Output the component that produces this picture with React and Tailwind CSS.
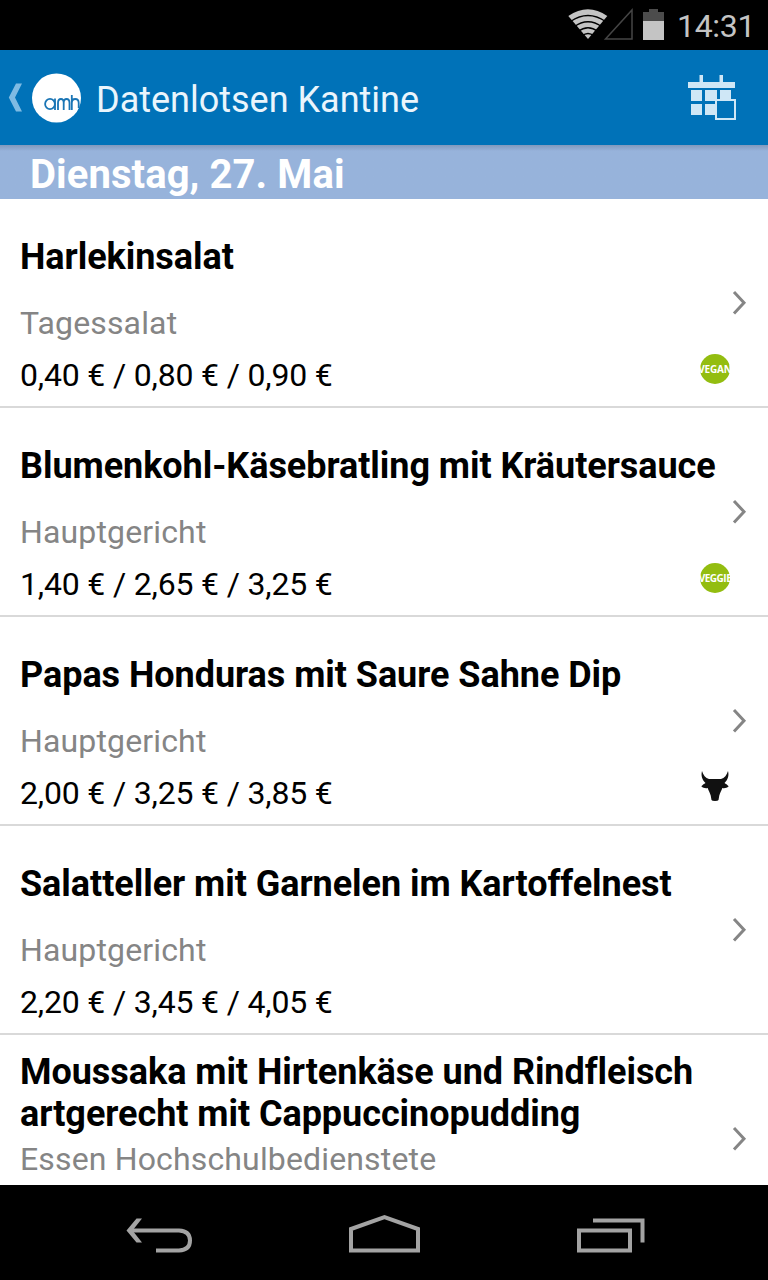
import React from 'react';

const meals = [
  { title: 'Harlekinsalat', category: 'Tagessalat', price: '0,40 € / 0,80 € / 0,90 €', badge: 'vegan' },
  { title: 'Blumenkohl-Käsebratling mit Kräutersauce', category: 'Hauptgericht', price: '1,40 € / 2,65 € / 3,25 €', badge: 'veggie' },
  { title: 'Papas Honduras mit Saure Sahne Dip', category: 'Hauptgericht', price: '2,00 € / 3,25 € / 3,85 €', badge: 'beef' },
  { title: 'Salatteller mit Garnelen im Kartoffelnest', category: 'Hauptgericht', price: '2,20 € / 3,45 € / 4,05 €' },
  { title: 'Moussaka mit Hirtenkäse und Rindfleisch artgerecht mit Cappuccinopudding', category: 'Essen Hochschulbedienstete', price: '' },
];

const StatusBar = () => (
  <div className="flex h-[50px] shrink-0 items-start justify-end bg-black pr-[15px]">
    <svg className="mt-[8px]" width="96" height="34" viewBox="568 8 96 34" fill="none">
      <path d="M588 39 L568.3 16 Q588 2.500 607.3 16 Z" fill="#c4c4c4" />
      <g stroke="#000" strokeWidth="1.300">
        <path d="M570.500 21.500 Q588 9.500 605.500 21.500" />
        <path d="M574 27 Q588 16.500 602 27" />
        <path d="M578 31.500 Q588 24 598 31.500" />
        <path d="M582 36 Q588 31 594 36" />
      </g>
      <path d="M605.500 39 H632 V10 Z" stroke="#454545" strokeWidth="1.500" />
      <path d="M643 12 H649 V9 H658 V12 H664 V22 H643 Z" fill="#4c4c4c" />
      <path d="M643 21 H664 V40 H643 Z" fill="#c4c4c4" />
    </svg>
    <span className="ml-[13px] mt-[7px] w-[76px] whitespace-nowrap text-[32px] leading-[38px] tracking-[-0.3px] text-[#c4c4c4]">14:31</span>
  </div>
);

const AppBar = () => (
  <header className="flex h-[95px] shrink-0 items-center bg-[#0072b8]">
    <svg className="ml-[8px]" width="15" height="29" viewBox="0 0 15 29">
      <path d="M8 0.500 H14 L7 14.500 L14 28.500 H8 L0.800 14.500 Z" fill="#7fbbe3" />
    </svg>
    <svg className="ml-[9px]" width="49" height="50" viewBox="0 0 49 50" fill="none">
      <ellipse cx="24.500" cy="25" rx="24.500" ry="24.500" fill="#fff" />
      <g stroke="#1a75b5" strokeWidth="1.800">
        <ellipse cx="18" cy="31" rx="4.900" ry="5.200" />
        <path d="M23 25.500 V37 M26 37 V30 Q26 26 29 26 Q31.700 26 31.700 30 V37 M31.700 30 Q31.700 26 34.500 26 Q37.500 26 37.500 30 V37 M39.800 22 V37 M39.800 30 Q39.800 26 43.200 26 Q46.700 26 46.700 30 V35" />
      </g>
    </svg>
    <h1 className="ml-[15px] mt-[5px] flex-1 text-[36px] leading-[42px] text-[#eaf5fc]">Datenlotsen Kantine</h1>
    <svg className="mr-[31px]" width="50" height="46" viewBox="687 75 50 46">
      <g fill="#cfe7f6">
        <path d="M688 82 H699.500 V75 H703 V82 H719.500 V75 H723 V82 H735 V88 H688 Z" />
        <path d="M691 90 H702 V101 H691 Z M705 90 H717 V101 H705 Z M720 90 H731 V101 H720 Z M691 104 H702 V115 H691 Z M705 104 H717 V115 H705 Z" />
      </g>
      <path d="M716 100 H735 V119 H716 Z" fill="#0072b8" stroke="#cfe7f6" strokeWidth="2" />
    </svg>
  </header>
);

const Badge = ({ type }) => {
  if (type === 'beef') {
    return (
      <svg className="mt-[-15px] mr-[38px]" width="30" height="32" viewBox="0 0 30 32" fill="#111">
        <path d="M2 1 C3.200 5 5.500 8 9 9 H21 C24.500 8 26.800 5 28 1 C29.300 5.500 27.800 10 24.500 13 C26 14 27 14.600 28.700 16.200 C26.800 18 24.500 18.500 22.300 18 C21.700 20.500 20 22.500 19.300 25.500 L18.500 30 Q18 31 15 31 Q12 31 11.500 30 L10.700 25.500 C10 22.500 8.300 20.500 7.700 18 C5.500 18.500 3.200 18 1.300 16.200 C3 14.600 4 14 5.500 13 C2.200 10 0.700 5.500 2 1 Z" />
      </svg>
    );
  }
  return (
    <div className="mr-[38px] mt-[-12px] flex h-[30px] w-[30px] items-center justify-center rounded-full bg-[#93bd10] font-['Open_Sans',sans-serif] font-bold leading-none text-white">
      {type === 'vegan'
        ? <span className="text-[10px] tracking-[-0.2px]">VEGAN</span>
        : <span className="text-[10px] tracking-[-0.5px]">VEGGIE</span>}
    </div>
  );
};

const MealRow = ({ meal }) => (
  <li className="h-[209px] shrink-0 border-b-2 border-[#d9d9d9] pl-[20px] pt-[16px]">
    <div className="flex">
      <div className="flex-1">
        <div className="flex h-[84px] items-center">
          <h3 className="w-[700px] text-[36px] font-bold leading-[42px] tracking-[-0.05px] text-black">{meal.title}</h3>
        </div>
        <p className="mt-[5px] text-[32px] leading-[38px] tracking-[0.15px] text-[#858585]">{meal.category}</p>
      </div>
      <svg className="mr-[21px] mt-[75px] shrink-0" width="15" height="26" viewBox="0 0 15 26" fill="none">
        <path d="M2 2 L12 12.700 L2 23.500" stroke="#858585" strokeWidth="3" />
      </svg>
    </div>
    <div className="mt-[14px] flex h-[38px] items-center justify-between">
      <p className="text-[32px] leading-[38px] tracking-[-0.17px] text-black">{meal.price}</p>
      {meal.badge && <Badge type={meal.badge} />}
    </div>
  </li>
);

const NavBar = () => (
  <nav className="flex h-[95px] shrink-0 items-center bg-black pl-[126px] pt-[3px]">
    <svg width="68" height="40" viewBox="126 1214 68 40" fill="none" stroke="#a3a3a3" strokeWidth="4">
      <path d="M129 1230.500 H179 Q190 1231 190 1240.500 Q190 1250 179 1250.500 H156" />
      <path d="M126.500 1230.500 L136.500 1218.500 H142 L132.500 1230.500 L142 1242.500 H136.500 Z" fill="#a3a3a3" stroke="none" />
    </svg>
    <svg className="ml-[154px]" width="74" height="40" viewBox="348 1214 74 40" fill="none" stroke="#a3a3a3" strokeWidth="4">
      <path d="M351 1250.500 V1229 L384.500 1217 L418 1229 V1250.500 Z" />
    </svg>
    <svg className="ml-[154px]" width="70" height="40" viewBox="576 1214 70 40" fill="none" stroke="#a3a3a3" strokeWidth="4">
      <path d="M579 1230.500 H630 V1250.500 H579 Z M593 1220.500 H642.500 V1242.500" />
    </svg>
  </nav>
);

const App = () => {
  return (
    <div className="flex h-[1280px] w-[768px] flex-col overflow-hidden bg-white font-['Roboto',sans-serif]">
      <StatusBar />
      <AppBar />
      <h2 className="h-[54px] shrink-0 bg-[#97b3db] bg-linear-to-b from-[#8199bd] to-[#97b3db] to-[6px] pl-[30px] pt-[6px] text-[40px] font-bold leading-[47px] tracking-[0.08px] text-white">
        Dienstag, 27. Mai
      </h2>
      <ul className="flex min-h-0 flex-1 flex-col overflow-hidden">
        {meals.map((meal) => (
          <MealRow key={meal.title} meal={meal} />
        ))}
      </ul>
      <NavBar />
    </div>
  );
};

export default App;
